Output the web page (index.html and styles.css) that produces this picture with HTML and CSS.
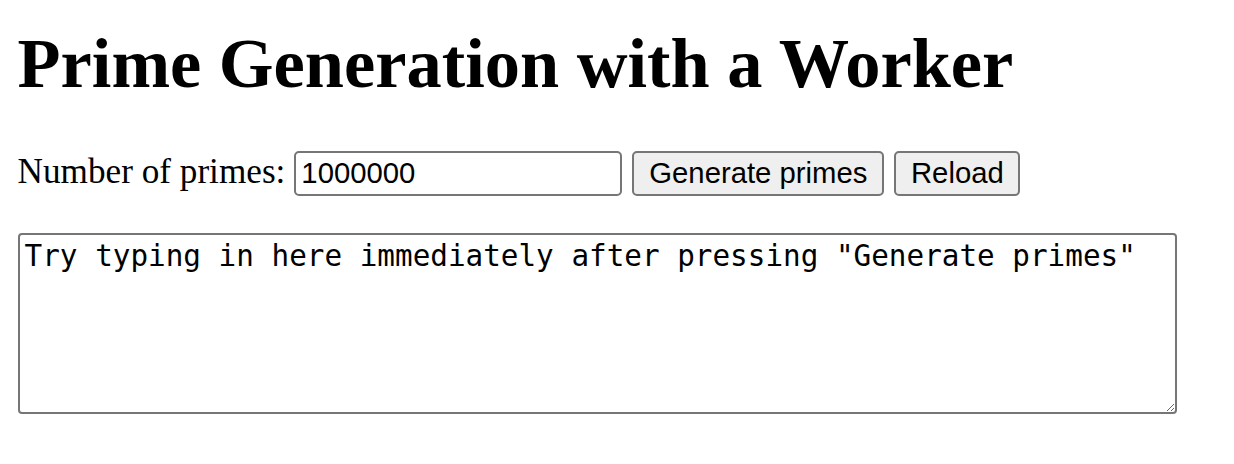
FILE: index.html
```html
<!DOCTYPE html>
<html lang="en">
<head>
<meta charset="utf-8">
<title>Prime Generation with a Worker</title>
<link rel="stylesheet" href="styles.css">
</head>
<body>
<h1 class="title">Prime Generation with a Worker</h1>
<div class="controls">
  <label class="label" for="quota">Number of primes:</label>
  <input class="field" type="text" id="quota" value="1000000">
  <button class="btn btn-generate" type="button">Generate primes</button>
  <button class="btn btn-reload" type="button">Reload</button>
</div>
<textarea class="user-input">Try typing in here immediately after pressing "Generate primes"</textarea>
</body>
</html>
```

FILE: styles.css
```css
html, body {
  background: #ffffff;
}
body {
  margin: 0;
  padding: 17.6px;
  font-family: "Liberation Serif", "Times New Roman", serif;
  font-size: 35.2px;
  color: #000;
}
.title {
  font-size: 70.4px;
  font-weight: bold;
  margin: 5px 0 47px 0;
  line-height: 1.15;
}
.controls {
  display: flex;
  align-items: baseline;
  gap: 9px;
  margin: 0;
}
.field {
  box-sizing: border-box;
  width: 328px;
  height: 45px;
  border: 2px solid #767676;
  border-radius: 5px;
  padding: 3px 5px;
  font-family: "Liberation Sans", Arial, sans-serif;
  font-size: 29.3px;
  color: #000;
  background: #fff;
  margin: 0 1px 0 0;
}
.btn {
  box-sizing: border-box;
  height: 45px;
  border: 2px solid #767676;
  border-radius: 5px;
  background: #efefef;
  font-family: "Liberation Sans", Arial, sans-serif;
  font-size: 29.3px;
  color: #000;
  padding: 0;
  margin: 0;
  text-align: center;
}
.btn-generate {
  width: 252px;
  margin-right: 1px;
}
.btn-reload {
  width: 126px;
}
.user-input {
  display: block;
  box-sizing: border-box;
  width: 1159px;
  height: 181px;
  margin: 37px 0 0 0;
  border: 2px solid #767676;
  border-radius: 4px;
  padding: 4px 5px;
  font-family: "DejaVu Sans Mono", monospace;
  font-size: 29.3px;
  line-height: 1.164;
  color: #000;
  background: #fff;
  resize: both;
}
```
